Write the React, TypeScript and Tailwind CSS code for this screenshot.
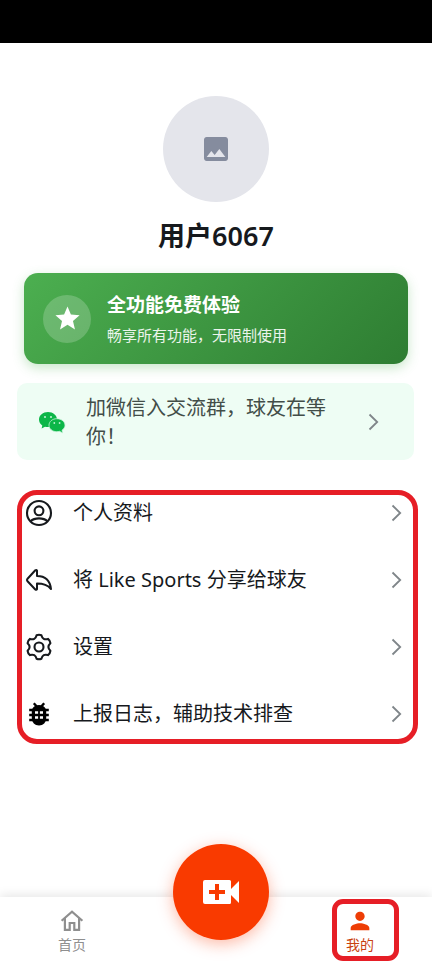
import type { ReactNode } from "react";
import { MdImage, MdPerson, MdStar } from "react-icons/md";

const menu: { label: string; icon: ReactNode }[] = [
  { label: "个人资料", icon: <ProfileIcon /> },
  { label: "将 Like Sports 分享给球友", icon: <ShareIcon /> },
  { label: "设置", icon: <GearIcon /> },
  { label: "上报日志，辅助技术排查", icon: <BugIcon /> },
];

export default function App() {
  return (
    <div className="flex min-h-screen flex-col bg-white font-['Noto_Sans','Noto_Sans_CJK_SC',sans-serif] text-[#16191d]">
      <div className="h-[43px] bg-black" />

      <main className="flex flex-1 flex-col pt-[53px] pb-8">
        <div className="flex flex-col items-center">
          <div className="grid size-[106px] place-items-center rounded-full bg-[#e4e5eb] text-[#858c9e]">
            <MdImage size={32} />
          </div>
          <h1 className="mt-4 text-[27px] leading-9 font-semibold">用户6067</h1>
        </div>

        <button className="mx-6 mt-[19px] flex h-[91px] items-center gap-4 rounded-[14px] bg-linear-135 from-[#4caf50] to-[#2e7d32] px-[19px] text-left text-white shadow-[0_4px_12px_rgba(76,175,80,0.3)]">
          <span className="grid size-12 place-items-center rounded-full bg-white/20">
            <MdStar size={29} />
          </span>
          <span className="flex flex-col gap-1">
            <span className="text-[19px] leading-7 font-bold">全功能免费体验</span>
            <span className="text-[15px] leading-6 text-white/90">畅享所有功能，无限制使用</span>
          </span>
        </button>

        <button className="mt-[19px] mr-[18px] ml-[17px] flex h-[77px] items-center rounded-[10px] bg-[#eefdf4] pr-[35px] pl-[21px] text-left">
          <WeChatIcon />
          <span className="ml-5 flex-1 pr-6 text-[20px] leading-[29px] text-[#424d48]">
            加微信入交流群，球友在等你！
          </span>
          <Chevron />
        </button>

        <nav className="mt-[30px] mr-[14px] ml-[17px] flex flex-col gap-[31px] rounded-[20px] border-5 border-[#e61e26] pb-[7px]">
          {menu.map((item) => (
            <button key={item.label} className="flex h-9 items-center pr-[11px] pl-[3px] text-left">
              <span className="grid size-7 place-items-center">{item.icon}</span>
              <span className="ml-5 flex-1 text-[20px] leading-9">{item.label}</span>
              <Chevron />
            </button>
          ))}
        </nav>
      </main>

      <footer className="relative grid h-[67px] grid-cols-3 bg-white shadow-[0_-2px_10px_rgba(0,0,0,0.1)]">
        <button className="flex flex-col items-center pt-2.5 text-[14px] leading-5 text-[#8f8f8f]">
          <HomeIcon />
          首页
        </button>
        <button
          aria-label="录制"
          className="absolute bottom-6 left-[40%] grid size-24 place-items-center rounded-full bg-[#f93a00] text-white shadow-[0_4px_16px_rgba(249,58,0,0.35)]"
        >
          <VideoAddIcon />
        </button>
        <button className="relative col-start-3 flex flex-col items-center pt-2.5 text-[14px] leading-5 text-[#c9410f]">
          <MdPerson size={28} className="text-[#ee3d05]" />
          我的
          <span className="absolute top-0.5 right-[33px] h-[62px] w-[67px] rounded-[11px] border-5 border-[#e61e26]" />
        </button>
      </footer>
    </div>
  );
}

function Chevron() {
  return (
    <svg width="11" height="18" viewBox="0 0 11 18" fill="none" stroke="#7f8589" strokeWidth="1.8" aria-hidden>
      <path d="M1.5 1.5L9.2 9L1.5 16.5" />
    </svg>
  );
}

function ProfileIcon() {
  return (
    <svg width="28" height="28" viewBox="0 0 28 28" fill="none" stroke="currentColor" strokeWidth="2.1" aria-hidden>
      <circle cx="14" cy="14" r="12" />
      <circle cx="14" cy="11.8" r="4.4" />
      <path d="M5.4 22.4C7.7 20.2 10.7 19.4 14 19.4S20.3 20.2 22.6 22.4" />
    </svg>
  );
}

function ShareIcon() {
  return (
    <svg width="28" height="28" viewBox="0 0 28 28" fill="none" stroke="currentColor" strokeWidth="2" strokeLinejoin="round" aria-hidden>
      <path d="M12 4.500V10C20.500 10 25 14.500 26 23C22.500 18.800 18 17.600 12 17.600V23.300Q11.300 24.300 10.300 23.500L2.300 15Q1.500 14 2.300 13L10.300 4.300Q11.300 3.500 12 4.500Z" />
    </svg>
  );
}

function GearIcon() {
  return (
    <svg width="28" height="28" viewBox="0 0 28 28" fill="none" stroke="currentColor" strokeWidth="2.1" strokeLinejoin="round" aria-hidden>
      <path d="M11.6 2.2Q14 1.200 16.4 2.200Q17.800 7.600 23 5.900Q25.100 7.500 25.400 10.200Q21.400 14 25.400 17.800Q25.100 20.500 23 22.100Q17.800 20.400 16.400 25.800Q14 26.800 11.600 25.800Q10.200 20.400 5 22.100Q2.900 20.500 2.600 17.800Q6.600 14 2.600 10.200Q2.900 7.500 5 5.900Q10.200 7.600 11.600 2.200Z" />
      <circle cx="14" cy="14" r="4.5" />
    </svg>
  );
}

function BugIcon() {
  return (
    <svg width="28" height="28" viewBox="0 0 28 28" aria-hidden>
      <path
        d="M8.800 3.200L12 6.800M19.200 3.200L16 6.800M4.200 10H23.800M4.200 15H23.800M4.200 20H23.800"
        stroke="#000"
        strokeWidth="2.4"
        fill="none"
      />
      <path d="M14 5C18.800 5 21.200 8 21.200 11.500V18C21.200 22.500 18.200 25.500 14 25.500S6.800 22.500 6.800 18V11.500C6.800 8 9.200 5 14 5Z" />
      <path fill="#fff" d="M10 11.200H13.100V13.800H10ZM14.900 11.200H18V13.800H14.900ZM10 16.200H13.100V18.800H10ZM14.900 16.200H18V18.800H14.900Z" />
    </svg>
  );
}

function HomeIcon() {
  return (
    <svg width="28" height="28" viewBox="0 0 28 28" fill="none" stroke="currentColor" strokeWidth="2.2" aria-hidden>
      <path d="M3.600 13.800L14 4.600L24.400 13.800M6.900 11.500V22.800H11.700V16H16.300V22.800H21.100V11.500" />
    </svg>
  );
}

function WeChatIcon() {
  return (
    <svg width="28" height="24" viewBox="0 0 28 24" aria-hidden>
      <path fill="#0cb648" d="M10 2C5 2 1 5.200 1 9.500C1 12 2.300 14.200 4.300 15.500L3.600 18.500L7 16.700C8 17 9 17.100 10 17.100C15 17.100 19 13.800 19 9.500S15 2 10 2Z" />
      <path fill="#0cb648" stroke="#c9f3d9" strokeWidth="0.8" d="M18.800 8.700C14.400 8.700 11 11.600 11 15.200S14.400 21.700 18.800 21.700C19.800 21.700 20.700 21.500 21.500 21.300L24.700 23L24 20.200C25.800 19 27 17.200 27 15.200C27 11.600 23.200 8.700 18.800 8.700Z" />
      <g fill="#bdf0d0">
        <circle cx="7" cy="7" r="1.100" />
        <circle cx="13" cy="7" r="1.100" />
        <circle cx="16.300" cy="13" r="0.900" />
        <circle cx="21.600" cy="13" r="0.900" />
      </g>
    </svg>
  );
}

function VideoAddIcon() {
  return (
    <svg width="36" height="24" viewBox="0 0 36 24" fill="currentColor" aria-hidden>
      <path
        fillRule="evenodd"
        d="M2 0H26.500Q28 0 28 1.500V9L36 1V23L28 15V22.500Q28 24 26.500 24H2Q0 24 0 22V2Q0 0 2 0ZM12 4V10H6V14H12V20H16V14H22V10H16V4Z"
      />
    </svg>
  );
}
